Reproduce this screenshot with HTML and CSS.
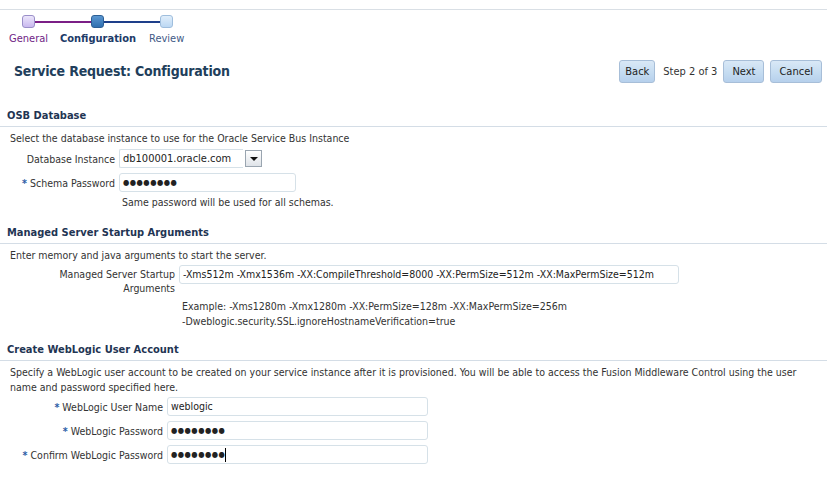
FILE: index.html
```html
<!DOCTYPE html>
<html lang="en">
<head>
  <meta charset="UTF-8" />
  <title>Service Request: Configuration</title>
  <link rel="stylesheet" href="styles.css">
</head>
<body>

  <div class="top-rule"></div>

  <!-- Train -->
  <div class="train">
    <div class="train-track">
      <span class="stop done"></span>
      <span class="link done"></span>
      <span class="stop current"></span>
      <span class="link"></span>
      <span class="stop next"></span>
    </div>
    <div class="train-labels">
      <span class="lbl-general">General</span>
      <span class="lbl-config">Configuration</span>
      <span class="lbl-review">Review</span>
    </div>
  </div>

  <div class="page-head">
    <h1>Service Request: Configuration</h1>
    <div class="nav-buttons">
      <button class="btn back">Back</button>
      <span class="step">Step 2 of 3</span>
      <button class="btn next">Next</button>
      <button class="btn cancel">Cancel</button>
    </div>
  </div>

  <!-- OSB Database -->
  <section class="osb">
    <h2>OSB Database</h2>
    <p class="desc">Select the database instance to use for the Oracle Service Bus Instance</p>
    <div class="form">
      <label>Database Instance</label>
      <div class="select">
        <span class="select-value">db100001.oracle.com</span>
        <span class="select-btn"><i></i></span>
      </div>
      <label><b>*</b> Schema Password</label>
      <div class="field pw w176">&#9679;&#9679;&#9679;&#9679;&#9679;&#9679;&#9679;&#9679;</div>
      <span></span>
      <p class="help">Same password will be used for all schemas.</p>
    </div>
  </section>

  <!-- Startup args -->
  <section class="args">
    <h2>Managed Server Startup Arguments</h2>
    <p class="desc">Enter memory and java arguments to start the server.</p>
    <div class="form">
      <label class="two-line">Managed Server Startup<br>Arguments</label>
      <div class="field w499">-Xms512m -Xmx1536m -XX:CompileThreshold=8000 -XX:PermSize=512m -XX:MaxPermSize=512m</div>
      <span></span>
      <p class="help">Example: -Xms1280m -Xmx1280m -XX:PermSize=128m -XX:MaxPermSize=256m<br>-Dweblogic.security.SSL.ignoreHostnameVerification=true</p>
    </div>
  </section>

  <!-- WebLogic user -->
  <section class="wls">
    <h2>Create WebLogic User Account</h2>
    <p class="desc">Specify a WebLogic user account to be created on your service instance after it is provisioned. You will be able to access the Fusion Middleware Control using the user name and password specified here.</p>
    <div class="form">
      <label><b>*</b> WebLogic User Name</label>
      <div class="field w260">weblogic</div>
      <label><b>*</b> WebLogic Password</label>
      <div class="field pw w260">&#9679;&#9679;&#9679;&#9679;&#9679;&#9679;&#9679;&#9679;</div>
      <label><b>*</b> Confirm WebLogic Password</label>
      <div class="field pw w260">&#9679;&#9679;&#9679;&#9679;&#9679;&#9679;&#9679;&#9679;<span class="caret"></span></div>
    </div>
  </section>

</body>
</html>
```

FILE: styles.css
```css
* {
  margin: 0;
  padding: 0;
  box-sizing: border-box;
}

body {
  font-family: 'DejaVu Sans Condensed', Tahoma, sans-serif;
  font-size: 10.5px;
  color: #333333;
  background: #ffffff;
}

.top-rule {
  margin-top: 9px;
  border-top: 1px solid #d9dfe5;
}

/* train */
.train-track {
  display: flex;
  align-items: center;
  margin-top: 5px;
  padding-left: 22px;
  height: 13px;
}

.stop {
  width: 13px;
  height: 13px;
  border-radius: 3px;
  border: 1px solid #9a8fc9;
  background: linear-gradient(#ece6fb, #c9b9ef);
}

.stop.current {
  border-color: #2c5f95;
  background: linear-gradient(#5b97d1, #2f6fb0);
}

.stop.next {
  border-color: #9fbedd;
  background: linear-gradient(#e0eefb, #bcd8f3);
}

.link {
  width: 56px;
  height: 2px;
  background: #1e3f8a;
}

.link.done {
  background: #7b1f86;
}

.train-labels {
  display: flex;
  margin-top: 4px;
  padding-left: 9px;
  font-size: 11px;
  line-height: 14px;
}

.lbl-general {
  color: #6f2385;
  width: 51px;
}

.lbl-config {
  color: #1d3b68;
  font-weight: bold;
  width: 89px;
}

.lbl-review {
  color: #3f5a86;
}

/* heading row */
.page-head {
  display: flex;
  justify-content: space-between;
  align-items: center;
  margin-top: 13px;
  padding: 0 5px 0 14px;
  height: 24px;
}

h1 {
  font-size: 14px;
  letter-spacing: -0.2px;
  font-weight: bold;
  color: #213e5b;
}

.nav-buttons {
  display: flex;
  align-items: center;
  gap: 5px;
}

.btn {
  font-family: inherit;
  font-size: 11px;
  color: #222222;
  height: 23px;
  padding: 0 7px;
  border: 1px solid #a7bed8;
  border-radius: 3px;
  background: linear-gradient(#d9e8f6, #c5dcf1 55%, #b6d0ec);
}

.btn.back {
  padding: 0 5px;
}

.btn.next {
  padding: 0 8px;
}

.btn.cancel {
  margin-left: 1px;
  padding: 0 8px;
}

.step {
  font-size: 11px;
  color: #333333;
  margin: 0 1px 0 3px;
}

/* sections */
section h2 {
  font-size: 11px;
  font-weight: bold;
  color: #1f3553;
  padding: 0 7px 3px;
  border-bottom: 1px solid #d4dde6;
  line-height: 14px;
}

.osb {
  margin-top: 26px;
}

.args {
  margin-top: 16px;
}

.wls {
  margin-top: 14px;
}

.desc {
  padding: 4px 10px 0;
  line-height: 15px;
  width: 820px;
}

.form {
  display: grid;
  align-items: center;
  column-gap: 4px;
  row-gap: 5px;
  margin-top: 3px;
}

.osb .form {
  grid-template-columns: 115px auto;
}

.args .form {
  grid-template-columns: 175px auto;
  margin-top: 2px;
}

.wls .form {
  grid-template-columns: 163px auto;
  margin-top: 2px;
}

label {
  text-align: right;
  white-space: nowrap;
}

label b {
  color: #2b5ca6;
}

.two-line {
  align-self: start;
  margin-top: 2px;
  line-height: 14px;
}

.args .form .field {
  align-self: start;
}

.select {
  display: flex;
  align-items: center;
  width: 143px;
  height: 19px;
}

.select-value {
  flex: 1;
  height: 19px;
  line-height: 17px;
  padding-left: 3px;
  border: 1px solid #d6e1e8;
  border-right: none;
  border-radius: 2px 0 0 2px;
  font-size: 11px;
  color: #222222;
}

.select-btn {
  width: 17px;
  height: 17px;
  margin-left: 2px;
  border: 1px solid #9aa5b0;
  background: linear-gradient(#ffffff, #dfe3e8);
  display: flex;
  align-items: center;
  justify-content: center;
}

.select-btn i {
  border-left: 4px solid transparent;
  border-right: 4px solid transparent;
  border-top: 4px solid #111111;
}

.field {
  height: 19px;
  line-height: 17px;
  padding-left: 3px;
  border: 1px solid #d6e1e8;
  border-radius: 3px;
  color: #222222;
  white-space: nowrap;
  overflow: hidden;
}

.field.pw {
  font-size: 8px;
  letter-spacing: 0.5px;
  color: #222222;
}

.caret {
  display: inline-block;
  width: 1px;
  height: 14px;
  background: #000000;
  vertical-align: middle;
}

.w176 { width: 177px; }
.w260 { width: 261px; }
.w499 { width: 500px; }

.help {
  padding-left: 3px;
  line-height: 15px;
}

.osb .help {
  margin-top: -2px;
}

.args .help {
  margin-top: -1px;
}
```
